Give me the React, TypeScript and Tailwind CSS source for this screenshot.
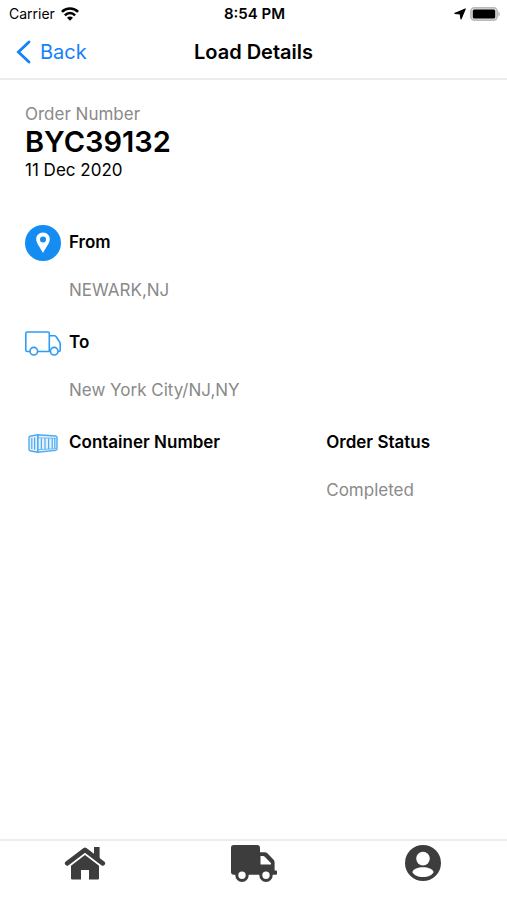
import type { ReactNode } from "react";

function WifiIcon() {
  return (
    <svg width="18" height="14" viewBox="0 0 18 14" aria-hidden="true">
      <g fill="none" stroke="#000" strokeWidth="2.6">
        <path d="M0.9 4.9C5.4 0.4 12.6 0.4 17.1 4.9" />
        <path d="M3.9 8.3C6.8 5.3 11.2 5.3 14.1 8.3" />
      </g>
      <path d="M9 13.8L6 10.8C7.7 9.1 10.3 9.1 12 10.8Z" />
    </svg>
  );
}

function LocationArrow() {
  return (
    <svg width="12" height="12" viewBox="0 0 12 12" aria-hidden="true">
      <path d="M11.3 0.9L7 11L6.2 6L0.8 5.4Z" stroke="#000" strokeWidth="1.1" strokeLinejoin="round" />
    </svg>
  );
}

function Battery() {
  return (
    <svg width="30" height="14" viewBox="0 0 30 14" aria-hidden="true">
      <rect x="0.8" y="0.8" width="26.4" height="12.4" rx="3.6" fill="#ddd" stroke="#b9b9b9" strokeWidth="1.6" />
      <rect x="2.8" y="2.5" width="22.4" height="9" rx="1.5" />
      <path d="M28.3 4.6C30.4 5.2 30.4 8.8 28.3 9.4Z" fill="#b9b9b9" />
    </svg>
  );
}

function PinIcon() {
  return (
    <svg width="36" height="36" viewBox="0 0 36 36" aria-hidden="true">
      <circle cx="18" cy="18" r="18" fill="#158cf2" />
      <path
        fillRule="evenodd"
        fill="#fff"
        d="M18 7.6C14 7.6 11.2 10.6 11.2 14.2C11.2 18.3 15.3 22.5 18 28C20.7 22.5 24.8 18.3 24.8 14.2C24.8 10.6 22 7.6 18 7.6ZM18 11.4A3 3 0 1 1 18 17.4A3 3 0 1 1 18 11.4Z"
      />
    </svg>
  );
}

function TruckOutline() {
  return (
    <svg width="36" height="25" viewBox="0 0 36 25" fill="none" stroke="#2f9bf2" strokeWidth="1.6" strokeLinejoin="round" aria-hidden="true">
      <path d="M5 20.5H2.2Q0.8 20.5 0.8 19V2.4Q0.8 1 2.2 1H23Q24.3 1 24.3 2.4V20.5H12.6" />
      <path d="M24.3 4.8H29.5Q30.6 4.8 31.2 5.8L34.6 11Q35.2 12 35.2 13V19Q35.2 20.5 34 20.5H33" />
      <circle cx="8.8" cy="20.2" r="3.8" />
      <circle cx="29.2" cy="20.2" r="3.8" />
    </svg>
  );
}

function ContainerIcon() {
  return (
    <svg width="30" height="19" viewBox="0 0 30 19" fill="none" stroke="#4fabf0" strokeLinejoin="round" aria-hidden="true">
      <path fill="#e2f1fd" d="M1 3.4Q1 2.4 2 2.2L9.5 0.8L27.6 2Q29 2.2 29 3.6V14.8Q29 16.2 27.6 16.4L9.5 18.2L2 16.8Q1 16.6 1 15.6Z" strokeWidth="1.4" />
      <path d="M9.8 1V18" strokeWidth="1.6" />
      <path d="M3.8 4V15M6.6 3.6V15.6" strokeWidth="1.2" />
      <path d="M13.4 4.4V15M17 4.4V15M20.6 4.4V15M24.2 4.6V14.8M26.8 4.6V14.8" strokeWidth="1.2" />
      <path d="M10 3.8L28 4.4M10 15.6L28 14.8" strokeWidth="0.8" />
    </svg>
  );
}

function HomeIcon() {
  return (
    <svg width="42" height="34" viewBox="0 0 42 34" fill="#3d3d3d" aria-hidden="true">
      <path d="M30 1H35.6V15L30 10.6Z" />
      <path d="M3.2 17.4L21 3.8L38.8 17.4" fill="none" stroke="#3d3d3d" strokeWidth="4.6" strokeLinecap="round" strokeLinejoin="round" />
      <path d="M21 9L35 19.8V32.6Q35 33.4 34.2 33.4H25V24H17V33.4H7.8Q7 33.4 7 32.6V19.8Z" />
    </svg>
  );
}

function TruckSolid() {
  return (
    <svg width="48" height="38" viewBox="0 0 48 38" fill="#3d3d3d" aria-hidden="true">
      <path
        fillRule="evenodd"
        d="M3.8 1H27Q30 1 30 4V8.2H34.5Q36.4 8.2 37.6 9.4L43.4 15.4Q44.6 16.6 44.6 18.4V26.6H46Q47 26.6 47 27.6V29.8Q47 30.8 46 30.8H3.8Q1 30.8 1 28V3.8Q1 1 3.8 1ZM30.5 12V20.4H41V19.2L34.8 12.8Q34 12 33 12Z"
      />
      <g stroke="#3d3d3d" strokeWidth="3" fill="#fff">
        <circle cx="12" cy="31.2" r="5.2" />
        <circle cx="36" cy="31.2" r="5.2" />
      </g>
    </svg>
  );
}

function ProfileIcon() {
  return (
    <svg width="36" height="36" viewBox="0 0 36 36" aria-hidden="true">
      <circle cx="18" cy="18" r="18" fill="#3d3d3d" />
      <g fill="#fff">
        <circle cx="18" cy="13.6" r="6.8" />
        <path d="M7.4 27.2C8.6 20.6 27.4 20.6 28.6 27.2C25.6 33.6 10.4 33.6 7.4 27.2Z" />
      </g>
    </svg>
  );
}

function Detail({ icon, label, value }: { icon?: ReactNode; label: string; value?: string }) {
  return (
    <div className="flex h-[100px] gap-2">
      {icon && <div className="flex h-9 w-9 shrink-0 items-center justify-center">{icon}</div>}
      <dl>
        <dt className="flex h-9 items-center font-semibold text-black">{label}</dt>
        <dd className="mt-[17px] leading-6 text-[#8a8a8a]">{value}</dd>
      </dl>
    </div>
  );
}

export default function App() {
  return (
    <div className="flex min-h-screen flex-col bg-white font-['Inter','Liberation_Sans',sans-serif] text-[17px] text-black">
      <div className="grid h-7 grid-cols-[1fr_auto_1fr] items-center pr-[7px] pl-[9px] text-sm">
        <div className="flex items-center gap-[6px]">
          <span>Carrier</span>
          <WifiIcon />
        </div>
        <span className="text-[15px] font-semibold">8:54 PM</span>
        <div className="flex items-center justify-end gap-1">
          <LocationArrow />
          <Battery />
        </div>
      </div>

      <header className="grid h-[52px] grid-cols-[1fr_auto_1fr] items-center border-b-2 border-[#ececec] px-4 pb-[2px] text-xl">
        <button type="button" className="flex items-center gap-[9px] justify-self-start text-[#1482f8]">
          <svg width="15" height="24" viewBox="0 0 15 24" fill="none" stroke="currentColor" strokeWidth="2.8" strokeLinecap="round" aria-hidden="true">
            <path d="M13 2L2.4 12L13 22" />
          </svg>
          Back
        </button>
        <h1 className="font-semibold">Load Details</h1>
      </header>

      <main className="flex-1 pt-6 pl-[25px]">
        <section className="h-[121px]">
          <p className="leading-5 text-[#8a8a8a]">Order Number</p>
          <h2 className="text-[29px] leading-9 font-semibold">BYC39132</h2>
          <p className="leading-5">11 Dec 2020</p>
        </section>
        <Detail icon={<PinIcon />} label="From" value="NEWARK,NJ" />
        <Detail icon={<TruckOutline />} label="To" value="New York City/NJ,NY" />
        <div className="grid grid-cols-[5fr_3fr]">
          <Detail icon={<ContainerIcon />} label="Container Number" />
          <Detail label="Order Status" value="Completed" />
        </div>
      </main>

      <nav className="grid h-[61px] grid-cols-3 border-t-2 border-[#ececec]" aria-label="Main">
        <button type="button" aria-label="Home" className="flex h-11 items-center justify-center">
          <HomeIcon />
        </button>
        <button type="button" aria-label="Loads" className="flex h-11 items-center justify-center">
          <TruckSolid />
        </button>
        <button type="button" aria-label="Profile" className="flex h-11 items-center justify-center">
          <ProfileIcon />
        </button>
      </nav>
    </div>
  );
}
